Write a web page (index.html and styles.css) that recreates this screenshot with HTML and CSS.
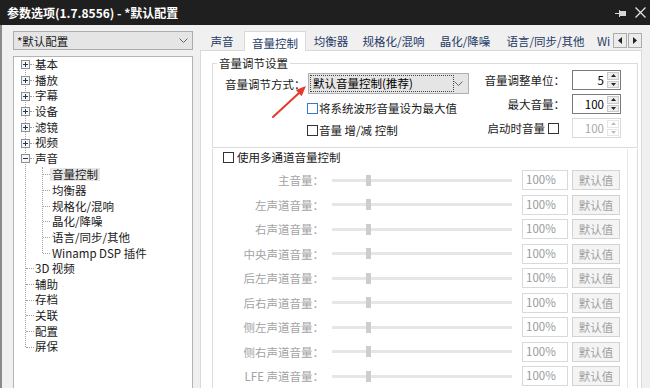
FILE: index.html
```html
<!DOCTYPE html>
<html lang="zh-CN">
<head>
  <meta charset="UTF-8">
  <title>参数选项</title>
  <link rel="stylesheet" href="styles.css">
</head>
<body>
  <header class="titlebar">
    <span class="title">参数选项(1.7.8556) - *默认配置</span>
    <span class="title-icons">
      <svg width="11" height="10" viewBox="0 0 11 10"><path d="M0 5.5h4M4.5 2v7" stroke="#d6d6d6"/><rect x="5" y="3" width="6" height="5" fill="#d6d6d6"/></svg>
      <svg width="11" height="11" viewBox="0 0 11 11"><path d="M0.5 0.5l10 10M10.5 0.5l-10 10" stroke="#e2e2e2" stroke-width="1.3"/></svg>
    </span>
  </header>

  <div class="window">
    <aside class="sidebar">
      <div class="combo profile">
        <span>*默认配置</span>
        <svg width="9" height="5" viewBox="0 0 9 5"><path d="M0.5 0.5l4 4 4-4" stroke="#666" fill="none"/></svg>
      </div>
      <div class="tree">
        <ul class="tree-root">
          <li class="node"><svg class="exp" width="9" height="9" viewBox="0 0 9 9"><rect x="0.5" y="0.5" width="8" height="8" fill="#f6f6f6" stroke="#8e8f8f"/><path d="M2 4.5h5M4.5 2v5" stroke="#1e395b"/></svg><i class="stub"></i><span>基本</span></li>
          <li class="node"><svg class="exp" width="9" height="9" viewBox="0 0 9 9"><rect x="0.5" y="0.5" width="8" height="8" fill="#f6f6f6" stroke="#8e8f8f"/><path d="M2 4.5h5M4.5 2v5" stroke="#1e395b"/></svg><i class="stub"></i><span>播放</span></li>
          <li class="node"><svg class="exp" width="9" height="9" viewBox="0 0 9 9"><rect x="0.5" y="0.5" width="8" height="8" fill="#f6f6f6" stroke="#8e8f8f"/><path d="M2 4.5h5M4.5 2v5" stroke="#1e395b"/></svg><i class="stub"></i><span>字幕</span></li>
          <li class="node"><svg class="exp" width="9" height="9" viewBox="0 0 9 9"><rect x="0.5" y="0.5" width="8" height="8" fill="#f6f6f6" stroke="#8e8f8f"/><path d="M2 4.5h5M4.5 2v5" stroke="#1e395b"/></svg><i class="stub"></i><span>设备</span></li>
          <li class="node"><svg class="exp" width="9" height="9" viewBox="0 0 9 9"><rect x="0.5" y="0.5" width="8" height="8" fill="#f6f6f6" stroke="#8e8f8f"/><path d="M2 4.5h5M4.5 2v5" stroke="#1e395b"/></svg><i class="stub"></i><span>滤镜</span></li>
          <li class="node"><svg class="exp" width="9" height="9" viewBox="0 0 9 9"><rect x="0.5" y="0.5" width="8" height="8" fill="#f6f6f6" stroke="#8e8f8f"/><path d="M2 4.5h5M4.5 2v5" stroke="#1e395b"/></svg><i class="stub"></i><span>视频</span></li>
          <li>
            <div class="node"><svg class="exp" width="9" height="9" viewBox="0 0 9 9"><rect x="0.5" y="0.5" width="8" height="8" fill="#f6f6f6" stroke="#8e8f8f"/><path d="M2 4.5h5" stroke="#1e395b"/></svg><i class="stub"></i><span>声音</span></div>
            <ul class="tree-sub">
              <li class="node child"><i class="stub"></i><span class="label selected">音量控制</span></li>
              <li class="node child"><i class="stub"></i><span class="label">均衡器</span></li>
              <li class="node child"><i class="stub"></i><span class="label">规格化/混响</span></li>
              <li class="node child"><i class="stub"></i><span class="label">晶化/降噪</span></li>
              <li class="node child"><i class="stub"></i><span class="label">语言/同步/其他</span></li>
              <li class="node child"><i class="stub"></i><span class="label">Winamp DSP 插件</span></li>
            </ul>
          </li>
          <li class="node leaf"><i class="stub"></i><span>3D 视频</span></li>
          <li class="node leaf"><i class="stub"></i><span>辅助</span></li>
          <li class="node leaf"><i class="stub"></i><span>存档</span></li>
          <li class="node leaf"><i class="stub"></i><span>关联</span></li>
          <li class="node leaf"><i class="stub"></i><span>配置</span></li>
          <li class="node leaf"><i class="stub"></i><span>屏保</span></li>
        </ul>
      </div>
    </aside>

    <main class="content">
      <div class="tabs">
        <span class="tab t1">声音</span>
        <span class="tab t2 active">音量控制</span>
        <span class="tab t3">均衡器</span>
        <span class="tab t4">规格化/混响</span>
        <span class="tab t5">晶化/降噪</span>
        <span class="tab t6">语言/同步/其他</span>
        <span class="tab t7">Wi</span>
        <span class="tab-scroll">
          <span class="scroll-btn"><svg width="4" height="7" viewBox="0 0 4 7"><path d="M4 0v7L0 3.5z" fill="#222"/></svg></span>
          <span class="scroll-btn"><svg width="4" height="7" viewBox="0 0 4 7"><path d="M0 0v7l4-3.5z" fill="#222"/></svg></span>
        </span>
      </div>

      <div class="tab-page">
        <fieldset class="group">
          <legend>音量调节设置</legend>
          <div class="settings">
            <div class="mode-col">
              <div class="mode-row">
                <span class="mode-label">音量调节方式：</span>
                <div class="combo mode-combo">
                  <span class="focus">默认音量控制(推荐)</span>
                  <svg width="9" height="5" viewBox="0 0 9 5"><path d="M0.5 0.5l4 4 4-4" stroke="#666" fill="none"/></svg>
                </div>
              </div>
              <label class="check-row"><i class="cb hover"></i>将系统波形音量设为最大值</label>
              <label class="check-row"><i class="cb"></i>音量 增/减 控制</label>
            </div>
            <div class="spin-col">
              <div class="spin-row">
                <span>音量调整单位：</span>
                <div class="spin"><span class="spin-val">5</span><span class="spin-btns"><b><svg width="5" height="3" viewBox="0 0 5 3"><path d="M0 3h5L2.5 0z" fill="#222"/></svg></b><b><svg width="5" height="3" viewBox="0 0 5 3"><path d="M0 0h5L2.5 3z" fill="#222"/></svg></b></span></div>
              </div>
              <div class="spin-row">
                <span>最大音量：</span>
                <div class="spin"><span class="spin-val">100</span><span class="spin-btns"><b><svg width="5" height="3" viewBox="0 0 5 3"><path d="M0 3h5L2.5 0z" fill="#222"/></svg></b><b><svg width="5" height="3" viewBox="0 0 5 3"><path d="M0 0h5L2.5 3z" fill="#222"/></svg></b></span></div>
              </div>
              <div class="spin-row">
                <span>启动时音量</span><i class="cb"></i>
                <div class="spin disabled"><span class="spin-val">100</span><span class="spin-btns"><b><svg width="5" height="3" viewBox="0 0 5 3"><path d="M0 3h5L2.5 0z" fill="#bbb"/></svg></b><b><svg width="5" height="3" viewBox="0 0 5 3"><path d="M0 0h5L2.5 3z" fill="#bbb"/></svg></b></span></div>
              </div>
            </div>
          </div>
        </fieldset>

        <section class="multi">
          <div class="multi-inner">
            <label class="check-row multi-check"><i class="cb"></i>使用多通道音量控制</label>
            <div class="channels" id="channels"></div>
          </div>
        </section>
      </div>
    </main>
  </div>

  <svg class="annotation" width="650" height="388" viewBox="0 0 650 388">
    <path d="M273 117L299 93" stroke="#e8372e" stroke-width="2" stroke-linecap="round"/>
    <path d="M306 86L301.6 96.2L295.8 90z" fill="#e8372e"/>
  </svg>

  <script>
    const channels = ['主音量', '左声道音量', '右声道音量', '中央声道音量', '后左声道音量',
      '后右声道音量', '侧左声道音量', '侧右声道音量', 'LFE 声道音量'];
    document.getElementById('channels').innerHTML = channels.map(name => `
      <div class="ch-row">
        <span class="ch-label">${name}：</span>
        <span class="slider"><i class="thumb"></i></span>
        <span class="pct">100%</span>
        <span class="def-btn">默认值</span>
      </div>`).join('');
  </script>
</body>
</html>
```

FILE: styles.css
```css
* {
  box-sizing: border-box;
}

body {
  margin: 0;
  width: 650px;
  height: 388px;
  overflow: hidden;
  position: relative;
  background-color: #f0f0f0;
  font-family: "Noto Sans CJK SC", "Noto Sans", sans-serif;
  font-size: 11.5px;
  color: #1a1a1a;
}

ul {
  list-style: none;
  margin: 0;
  padding: 0;
}

/* title bar */
.titlebar {
  height: 25px;
  background-color: #1f1f1f;
  color: #fff;
  display: flex;
  align-items: center;
  padding: 0 4px 0 7px;
  font-size: 12px;
}

.title {
  flex: 1;
  font-weight: bold;
}

.title-icons {
  display: flex;
  align-items: center;
  gap: 9px;
}

/* window body */
.window {
  display: flex;
  height: 363px;
  padding: 6px 8px 0 11px;
  border-left: 2px solid #8a8a8a;
}

.sidebar {
  width: 180px;
  margin-right: 7px;
  display: flex;
  flex-direction: column;
}

.combo {
  display: flex;
  align-items: center;
  justify-content: space-between;
  border: 1px solid #adadad;
  background-color: #e5e5e5;
}

.profile {
  height: 19px;
  padding: 0 4px 0 3px;
}

.tree {
  flex: 1;
  margin-top: 6px;
  border: 1px solid #b4b4b4;
  border-bottom: none;
  background: #fff;
}

.tree-root,
.tree-sub {
  position: relative;
}

.tree-root::before {
  content: "";
  position: absolute;
  left: 11px;
  top: 7.85px;
  bottom: 7.85px;
  border-left: 1px dotted #a0a0a0;
}

.tree-sub::before {
  content: "";
  position: absolute;
  left: 28px;
  top: 0;
  bottom: 7.85px;
  border-left: 1px dotted #a0a0a0;
}

.node {
  display: flex;
  align-items: center;
  height: 15.7px;
  line-height: 15.7px;
  padding-left: 7px;
  white-space: nowrap;
}

.exp {
  position: relative;
  flex: none;
}

.stub {
  width: 4px;
  height: 0;
  border-top: 1px dotted #a0a0a0;
  margin-right: 1px;
}

.leaf .stub {
  margin-left: 5px;
  width: 8px;
}

.node.child {
  padding-left: 29px;
}

.child .stub {
  width: 7px;
  margin-right: 0;
}

.label {
  padding: 0 2px;
  line-height: 13px;
}

.label.selected {
  background-color: #e6e6e6;
}

/* tabs */
.content {
  width: 442px;
  display: flex;
  flex-direction: column;
}

.tabs {
  display: flex;
  height: 19px;
  position: relative;
  z-index: 1;
}

.tab {
  text-align: center;
  color: #263a66;
  line-height: 18px;
  padding-top: 1px;
  white-space: nowrap;
  overflow: hidden;
}

.tab.active {
  height: 20px;
  background: #fff;
  border: 1px solid #d9d9d9;
  border-bottom: none;
  padding-top: 2px;
}

.t1 { width: 44px; }
.t2 { width: 62px; }
.t3 { width: 50px; }
.t4 { width: 75px; }
.t5 { width: 68px; }
.t6 { width: 93px; }
.t7 { width: 20px; text-align: left; padding-left: 5px; }

.tab-scroll {
  display: flex;
  gap: 1px;
  margin: 2px 0 0 1px;
}

.scroll-btn {
  width: 14px;
  height: 15px;
  border: 1px solid #acacac;
  background-color: #ececec;
  display: flex;
  align-items: center;
  justify-content: center;
}

.tab-page {
  flex: 1;
  background: #fff;
  border: 1px solid #d9d9d9;
  border-bottom: none;
  padding: 4px 3px 0 11px;
}

/* volume group */
.group {
  margin: 0;
  padding: 0;
  min-width: 0;
  border: 1px solid #dcdcdc;
}

.group legend {
  margin-left: 4px;
  padding: 0 2px;
  line-height: 16px;
}

.settings {
  display: flex;
  justify-content: space-between;
  padding: 0 16px 9px 12px;
}

.mode-row {
  display: flex;
  align-items: center;
  height: 21px;
  margin-top: 2px;
}

.mode-label {
  width: 83px;
  white-space: nowrap;
}

.mode-combo {
  width: 161px;
  height: 21px;
  padding: 2px 5px 2px 2px;
  border-color: #b0b0b0;
}

.focus {
  width: 142px;
  height: 15px;
  line-height: 14px;
  padding-left: 2px;
  outline: 1px dotted #444;
  color: #000;
}

.check-row {
  display: flex;
  align-items: center;
  height: 16px;
  margin: 6px 0 0 82px;
  white-space: nowrap;
}

.cb {
  width: 11px;
  height: 11px;
  border: 1px solid #333;
  background: #fff;
  margin-right: 1px;
  flex: none;
}

.cb.hover {
  border-color: #2e7bd1;
}

.spin-col {
  display: flex;
  flex-direction: column;
  gap: 4px;
  margin-top: -1px;
}

.spin-row {
  display: flex;
  align-items: center;
  justify-content: flex-end;
  height: 20px;
  white-space: nowrap;
}

.spin-row .cb {
  margin: 0 6px 0 3px;
}

.spin {
  width: 49px;
  height: 20px;
  margin-left: 7px;
  display: flex;
  border: 1px solid #7a7a7a;
  background: #fff;
}

.spin-val {
  flex: 1;
  text-align: right;
  padding-right: 3px;
  line-height: 18px;
  color: #000;
}

.spin-btns {
  width: 13px;
  display: flex;
  flex-direction: column;
  gap: 1px;
  padding: 1px 1px 1px 0;
}

.spin-btns b {
  flex: 1;
  display: flex;
  align-items: center;
  justify-content: center;
  background-color: #ededed;
  border: 1px solid #c9c9c9;
}

.spin.disabled {
  border-color: #d9d9d9;
}

.spin.disabled .spin-val {
  color: #a8a8a8;
}

.spin.disabled .spin-btns b {
  background: #fff;
  border-color: #e6e6e6;
}

/* multi channel */
.multi {
  border: 1px solid #dcdcdc;
  border-top: none;
  height: 250px;
}

.multi-inner {
  height: 100%;
  padding-right: 7px;
  border-right: 1px solid #e6e6e6;
  margin-right: 9px;
}

.multi-check {
  margin: 1px 0 0 10px;
  color: #1a1a1a;
}

.multi-check .cb {
  margin-right: 3px;
}

.channels {
  display: flex;
  flex-direction: column;
  gap: 4.5px;
  margin-top: 5px;
}

.ch-row {
  display: flex;
  align-items: center;
  height: 20px;
}

.ch-label {
  width: 111px;
  text-align: right;
  color: #a3a3a3;
  white-space: nowrap;
}

.slider {
  width: 180px;
  height: 11px;
  margin-left: 8px;
  display: flex;
  align-items: center;
  background: linear-gradient(#e6e6e6, #e6e6e6) center / 100% 3px no-repeat;
}

.thumb {
  width: 5px;
  height: 11px;
  margin-left: 34px;
  background-color: #cdcdcd;
}

.pct {
  width: 46px;
  height: 20px;
  margin-left: 10px;
  padding-left: 3px;
  border: 1px solid #d9d9d9;
  color: #9a9a9a;
  line-height: 16px;
}

.def-btn {
  width: 48px;
  height: 20px;
  margin-left: 4px;
  border: 1px solid #d3d3d3;
  background-color: #f4f4f4;
  color: #a0a0a0;
  text-align: center;
  line-height: 18px;
}

/* red annotation arrow */
.annotation {
  position: absolute;
  left: 0;
  top: 0;
  pointer-events: none;
}
```
